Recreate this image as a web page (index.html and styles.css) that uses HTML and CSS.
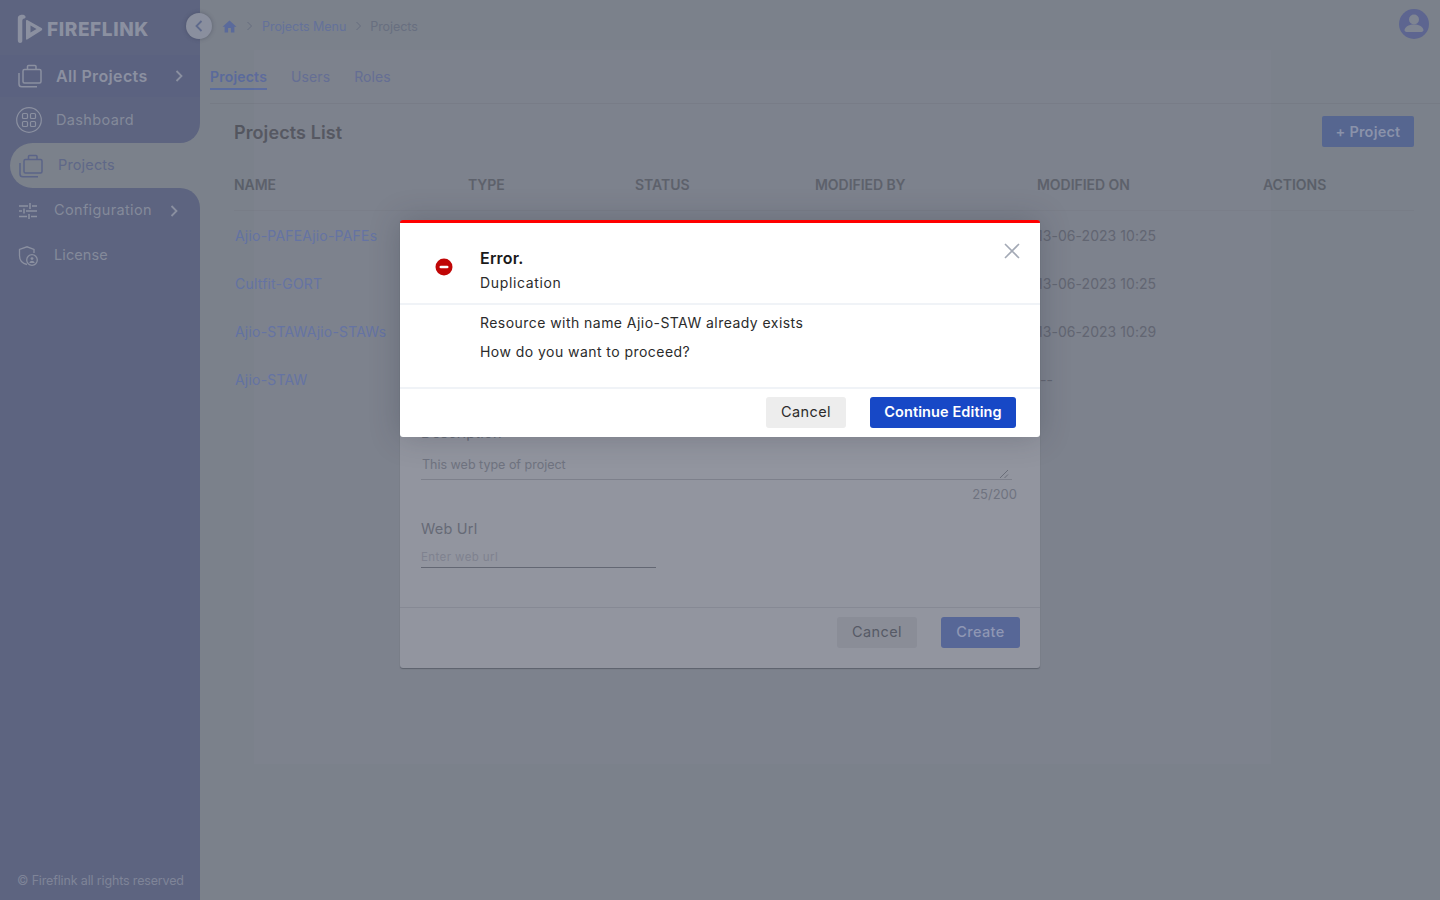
FILE: index.html
```html
<!DOCTYPE html>
<html lang="en">
<head>
    <meta charset="UTF-8">
    <meta name="viewport" content="width=device-width, initial-scale=1.0">
    <title>Projects</title>
    <link rel="stylesheet" href="styles.css">
</head>
<body>
    <div class="app">
        <aside class="sidebar">
            <div class="logo">
                <svg width="28" height="30" viewBox="0 0 28 30"><path d="M3.500 1C1.500 1.300.800 2.500.800 5v21c0 1.800.800 3 2.300 3 1.300 0 2.200-1 2.200-2.300V7c0-1.500.8-2.300 2-2.500 1-.2 1.500-1 1.200-2C8 1 6 .6 3.500 1z" fill="#8b90a0"/><path d="M9 6.500v18.500c0 .6.600 1 1.200.6L24.500 16.500c1-.7 1-1.800 0-2.400L10.200 6c-.6-.3-1.200 0-1.200.5zM13.500 11.500l6 3.500-6 3.500z" fill="#8b90a0" fill-rule="evenodd"/></svg>
                <span class="logo-text">FIREFLINK</span>
            </div>
            <div class="side-head">
                <svg class="side-icon" width="26" height="26" viewBox="0 0 26 26" fill="none" stroke="#8b90a0" stroke-width="1.500"><rect x="6" y="6.500" width="18" height="13.500" rx="1.500"/><path d="M10.500 6.500V3.500c0-.6.400-1 1-1h6.500c.6 0 1 .4 1 1v3M2 10v11c0 1.800 1 2.800 2.800 2.800H20"/></svg>
                <span class="side-head-label">All Projects</span>
                <svg class="chev" width="10" height="14" viewBox="0 0 10 14" fill="none" stroke="#8b90a0" stroke-width="1.800"><path d="M2.500 2l5 5-5 5"/></svg>
            </div>
            <div class="notch">
                <div class="side-item item-before">
                    <svg class="side-icon" width="26" height="26" viewBox="0 0 26 26" fill="none" stroke="#8b90a0" stroke-width="1.200"><circle cx="13" cy="13" r="12.300"/><rect x="6.500" y="6.500" width="5" height="5" rx="1"/><rect x="14.500" y="6.500" width="5" height="5" rx="1"/><rect x="6.500" y="14.500" width="5" height="5" rx="1"/><rect x="14.500" y="14.500" width="5" height="5" rx="1"/></svg>
                    <span>Dashboard</span>
                </div>
            </div>
            <div class="active-row">
                <div class="side-item item-active">
                    <svg class="side-icon" width="26" height="26" viewBox="0 0 26 26" fill="none" stroke="#5b6488" stroke-width="1.500"><rect x="6" y="6.500" width="18" height="13.500" rx="1.500"/><path d="M10.500 6.500V3.500c0-.6.400-1 1-1h6.500c.6 0 1 .4 1 1v3M2 10v11c0 1.800 1 2.800 2.800 2.800H20"/></svg>
                    <span>Projects</span>
                </div>
            </div>
            <div class="notch">
                <div class="side-item item-after">
                    <svg class="side-icon-sm" width="20" height="20" viewBox="0 0 20 20" fill="none" stroke="#8b90a0" stroke-width="1.500"><path d="M1 5h9M14 5h5M12 2v6M1 10h3M8 10h11M6 7.500v5M1 15.500h8M13 15.500h6M11 13v5"/></svg>
                    <span>Configuration</span>
                    <svg class="chev" width="10" height="14" viewBox="0 0 10 14" fill="none" stroke="#8b90a0" stroke-width="1.800"><path d="M2.500 2l5 5-5 5"/></svg>
                </div>
            </div>
            <div class="side-item item-plain">
                <svg class="side-icon-sm" width="20" height="20" viewBox="0 0 20 20" fill="none" stroke="#8b90a0" stroke-width="1.300"><path d="M9 18.500C4.500 17.500 1.500 14 1.500 9.500V3.500L9 .8l7 2.700V7"/><circle cx="14" cy="14" r="5.300" fill="#5d6480"/><circle cx="14" cy="12.600" r="1.400" fill="#8b90a0" stroke="none"/><path d="M11.300 17c.4-1.500 1.500-2.200 2.700-2.200s2.300.7 2.700 2.200" fill="#8b90a0" stroke="none"/></svg>
                <span>License</span>
            </div>
            <div class="copyright">© Fireflink all rights reserved</div>
        </aside>

        <main class="main">
            <div class="topbar">
                <nav class="crumbs">
                    <svg width="15" height="15" viewBox="0 0 16 16"><path d="M6.500 14.500v-5h3v5h3.700V8.300h2.200L8 1.500.6 8.300h2.200v6.200z" fill="#5a6a9b"/></svg>
                    <svg width="7" height="10" viewBox="0 0 7 10" fill="none" stroke="#666d7f" stroke-width="1"><path d="M1.500 1l4 4-4 4"/></svg>
                    <span class="crumb-link">Projects Menu</span>
                    <svg width="7" height="10" viewBox="0 0 7 10" fill="none" stroke="#666d7f" stroke-width="1"><path d="M1.500 1l4 4-4 4"/></svg>
                    <span class="crumb-cur">Projects</span>
                </nav>
                <svg class="avatar" width="30" height="30" viewBox="0 0 30 30"><circle cx="15" cy="15" r="15" fill="#5d6590"/><circle cx="15" cy="10.500" r="5" fill="#7f8592"/><path d="M5.500 21c1-4 5-5.500 9.500-5.500s8.500 1.500 9.500 5.500c0 1-.8 1.800-2 2h-15c-1.200-.2-2-1-2-2z" fill="#7f8592"/></svg>
            </div>

            <div class="tabs">
                <span class="tab tab-active">Projects</span>
                <span class="tab">Users</span>
                <span class="tab">Roles</span>
            </div>

            <section class="panel">
                <div class="panel-head">
                    <h1 class="panel-title">Projects List</h1>
                    <button class="btn-project">+ Project</button>
                </div>
                <div class="grid-row grid-head">
                    <span>NAME</span><span>TYPE</span><span>STATUS</span><span>MODIFIED BY</span><span>MODIFIED ON</span><span>ACTIONS</span>
                </div>
                <div class="grid-row"><a>Ajio-PAFEAjio-PAFEs</a><span></span><span></span><span></span><span>13-06-2023 10:25</span><span></span></div>
                <div class="grid-row"><a>Cultfit-GORT</a><span></span><span></span><span></span><span>13-06-2023 10:25</span><span></span></div>
                <div class="grid-row"><a>Ajio-STAWAjio-STAWs</a><span></span><span></span><span></span><span>13-06-2023 10:29</span><span></span></div>
                <div class="grid-row"><a>Ajio-STAW</a><span></span><span></span><span></span><span class="cell-dash">--</span><span></span></div>
            </section>
        </main>
    </div>

    <button class="collapse">
        <svg width="10" height="14" viewBox="0 0 10 14" fill="none" stroke="#5f6a8c" stroke-width="1.800"><path d="M7.500 2l-5 5 5 5"/></svg>
    </button>

    <div class="veil"></div>

    <div class="create-modal">
        <div class="create-body">
            <label class="field-label">Description</label>
            <div class="area">
                <span>This web type of project</span>
                <svg width="10" height="10" viewBox="0 0 10 10" stroke="#5f6470" stroke-width=".8"><path d="M1 9l8-8M5.500 9L9 5.500"/></svg>
            </div>
            <div class="counter">25/200</div>
            <label class="field-label url-label">Web Url</label>
            <div class="url-input">Enter web url</div>
        </div>
        <div class="create-foot">
            <button class="btn btn-dim">Cancel</button>
            <button class="btn btn-create">Create</button>
        </div>
    </div>

    <div class="alert">
        <div class="alert-head">
            <svg class="alert-icon" width="18" height="18" viewBox="0 0 18 18"><circle cx="9" cy="9" r="8.500" fill="#c00606"/><rect x="4.500" y="7.700" width="9" height="2.600" rx="1.300" fill="#fff"/></svg>
            <div>
                <div class="alert-title">Error.</div>
                <div class="alert-sub">Duplication</div>
            </div>
            <svg class="alert-close" width="16" height="16" viewBox="0 0 16 16" fill="none" stroke="#a3a9b5" stroke-width="1.600"><path d="M1 1l14 14M15 1L1 15"/></svg>
        </div>
        <div class="alert-body">
            <p>Resource with name Ajio-STAW already exists</p>
            <p>How do you want to proceed?</p>
        </div>
        <div class="alert-foot">
            <button class="btn btn-cancel">Cancel</button>
            <button class="btn btn-primary">Continue Editing</button>
        </div>
    </div>
</body>
</html>
```

FILE: styles.css
```css
* {
    box-sizing: border-box;
}
html, body {
    height: 100%;
}
body {
    margin: 0;
    background: #7b818b;
    font-family: "Inter", "Noto Sans", sans-serif;
    font-size: 14px;
    letter-spacing: 0.2px;
    color: #5a5f69;
    overflow: hidden;
}
button {
    font-family: inherit;
    letter-spacing: inherit;
    border: none;
}

.app {
    display: flex;
    height: 900px;
}

/* sidebar */
.sidebar {
    width: 200px;
    flex: none;
    display: flex;
    flex-direction: column;
    background: #5d6480;
    color: #848a9a;
}
.logo {
    height: 55px;
    padding: 3px 0 0 17px;
    display: flex;
    align-items: center;
    gap: 2px;
}
.logo-text {
    font-size: 19px;
    font-weight: 800;
    letter-spacing: 0.6px;
    color: #8b90a0;
}
.side-head {
    height: 42px;
    padding: 0 0 0 17px;
    display: flex;
    align-items: center;
    background: #5b6280;
}
.side-head-label {
    margin-left: 13px;
    width: 118px;
    font-size: 16px;
    font-weight: 600;
    letter-spacing: 0.35px;
    color: #8b90a0;
}
.notch {
    background: #7b818b;
}
.side-item {
    display: flex;
    align-items: center;
    background: #5d6480;
    font-size: 14.500px;
    letter-spacing: 0.35px;
}
.side-item span {
    margin-top: -2px;
}
.item-before {
    height: 46px;
    padding-left: 16px;
    gap: 14px;
    border-bottom-right-radius: 20px;
}
.active-row {
    background: #5d6480;
    padding-left: 10px;
}
.item-active {
    height: 45px;
    padding-left: 8px;
    gap: 14px;
    background: #7b818b;
    color: #5f6888;
    letter-spacing: 0.15px;
    border-radius: 23px 0 0 23px;
}
.item-after {
    height: 45px;
    padding-left: 18px;
    gap: 16px;
    border-top-right-radius: 20px;
}
.item-after .chev {
    margin-left: 1px;
}
.item-plain {
    height: 45px;
    padding-left: 18px;
    gap: 16px;
    letter-spacing: 0.1px;
}
.copyright {
    margin-top: auto;
    height: 40px;
    padding-left: 17px;
    display: flex;
    align-items: center;
    font-size: 12.500px;
    letter-spacing: -0.15px;
    color: #7f8498;
}

/* main area */
.main {
    flex: 1;
    min-width: 0;
}
.topbar {
    height: 52px;
    padding: 0 11px 0 22px;
    display: flex;
    align-items: center;
    justify-content: space-between;
}
.avatar {
    margin-bottom: 4px;
}
.crumbs {
    display: flex;
    align-items: center;
    gap: 9px;
    font-size: 12.500px;
    letter-spacing: -0.05px;
}
.crumb-link {
    color: #64719a;
}
.crumb-cur {
    color: #686f80;
    margin-left: -1px;
}
.tabs {
    height: 52px;
    margin-left: 10px;
    display: flex;
    gap: 24px;
    border-bottom: 1px solid #767b85;
}
.tab {
    height: 38px;
    padding-top: 16px;
    font-size: 14px;
    letter-spacing: 0.1px;
    color: #626d92;
}
.tab-active {
    font-weight: 600;
    letter-spacing: 0.2px;
    color: #5a6a9b;
    border-bottom: 2px solid #5a6c9f;
}
.panel {
    padding: 0 26px 0 34px;
}
.panel-head {
    height: 55px;
    display: flex;
    align-items: center;
    justify-content: space-between;
}
.panel-title {
    margin: 2px 0 0;
    font-size: 18px;
    font-weight: 600;
    letter-spacing: 0.1px;
    color: #53565f;
}
.btn-project {
    width: 92px;
    height: 31px;
    background: #566690;
    color: #8a92aa;
    font-size: 14.500px;
    font-weight: 600;
    border-radius: 2px;
}
.grid-row {
    height: 48px;
    display: grid;
    grid-template-columns: 234px 167px 180px 222px 226px 1fr;
    align-items: center;
    font-size: 14px;
    letter-spacing: 0.05px;
    color: #5f6470;
}
.grid-row a {
    color: #6272a2;
    white-space: nowrap;
    padding-left: 1px;
    letter-spacing: 0.2px;
}
.grid-head {
    height: 52px;
    font-weight: 600;
    font-size: 14px;
    letter-spacing: -0.05px;
    color: #5a5f69;
    border-bottom: 1px solid #787d87;
}
.cell-dash {
    padding-left: 3px;
}

/* faint lighter box behind the dialogs */
.veil {
    position: absolute;
    left: 254px;
    top: 50px;
    width: 1017px;
    height: 714px;
    background: rgba(255, 225, 255, 0.018);
}

.collapse {
    position: absolute;
    left: 186px;
    top: 13px;
    width: 26px;
    height: 26px;
    padding: 0;
    display: flex;
    align-items: center;
    justify-content: center;
    border-radius: 50%;
    background: #8a8f9e;
    box-shadow: 0 0 4px rgba(50, 55, 75, 0.4);
}

/* form dialog, dimmed */
.create-modal {
    position: absolute;
    left: 400px;
    top: 220px;
    width: 640px;
    height: 448px;
    display: flex;
    flex-direction: column;
    background: #92959f;
    border-radius: 3px;
    box-shadow: 0 1px 1px rgba(60, 65, 75, 0.5);
}
.create-body {
    flex: 1;
    padding: 0 23px 39px 21px;
    display: flex;
    flex-direction: column;
    justify-content: flex-end;
}
.field-label {
    font-size: 14.500px;
    color: #666a76;
}
.area {
    margin: 16px 5px 0 0;
    height: 23px;
    padding: 0 3px 0 1px;
    display: flex;
    align-items: flex-start;
    justify-content: space-between;
    font-size: 12.500px;
    letter-spacing: 0;
    color: #6f7380;
    border-bottom: 1px solid #7d808b;
}
.area svg {
    margin-top: 12px;
}
.counter {
    margin-top: 6px;
    text-align: right;
    font-size: 13px;
    letter-spacing: 0;
    color: #6f7380;
}
.url-label {
    margin-top: 18px;
}
.url-input {
    margin-top: 9px;
    width: 235px;
    height: 22px;
    padding-top: 4px;
    font-size: 11.500px;
    letter-spacing: 0.4px;
    color: #7f828f;
    border-bottom: 1px solid #636773;
}
.create-foot {
    height: 61px;
    padding: 9px 20px 0 0;
    display: flex;
    justify-content: flex-end;
    gap: 24px;
    border-top: 1px solid #868994;
}

.btn {
    height: 31px;
    padding: 0 0 2px;
    font-size: 14.500px;
    border-radius: 3px;
}
.btn-dim {
    width: 80px;
    background: #8a8d97;
    color: #565a66;
    letter-spacing: 0.4px;
}
.btn-create {
    width: 79px;
    background: #576797;
    color: #8f97b4;
    font-weight: 500;
    letter-spacing: 0.35px;
}

/* error dialog */
.alert {
    position: absolute;
    left: 400px;
    top: 220px;
    width: 640px;
    height: 217px;
    display: flex;
    flex-direction: column;
    background: #fff;
    border-top: 3px solid #f00;
    border-radius: 3px;
    box-shadow: 0 0 30px rgba(40, 45, 60, 0.25);
}
.alert-head {
    position: relative;
    height: 82px;
    padding: 23px 0 0 80px;
    border-bottom: 2px solid #f0f3f7;
}
.alert-icon {
    position: absolute;
    left: 35px;
    top: 35px;
}
.alert-close {
    position: absolute;
    right: 20px;
    top: 20px;
}
.alert-title {
    font-size: 16px;
    font-weight: 600;
    line-height: 24px;
    color: #1a1a1a;
}
.alert-sub {
    margin-top: 1px;
    line-height: 24px;
    letter-spacing: 0.65px;
    color: #2b2b2b;
}
.alert-body {
    height: 84px;
    padding: 7px 0 0 80px;
    letter-spacing: 0.45px;
    color: #2b2b2b;
    border-bottom: 2px solid #f0f3f7;
}
.alert-body p {
    margin: 0 0 8px;
    line-height: 21px;
}
.alert-foot {
    flex: 1;
    padding: 8px 24px 0 0;
    display: flex;
    justify-content: flex-end;
    gap: 24px;
}
.btn-cancel {
    width: 80px;
    background: #ededed;
    color: #2b2b2b;
    letter-spacing: 0.4px;
}
.btn-primary {
    width: 146px;
    background: #1748c6;
    color: #fff;
    font-weight: 600;
    letter-spacing: 0.1px;
}
```
